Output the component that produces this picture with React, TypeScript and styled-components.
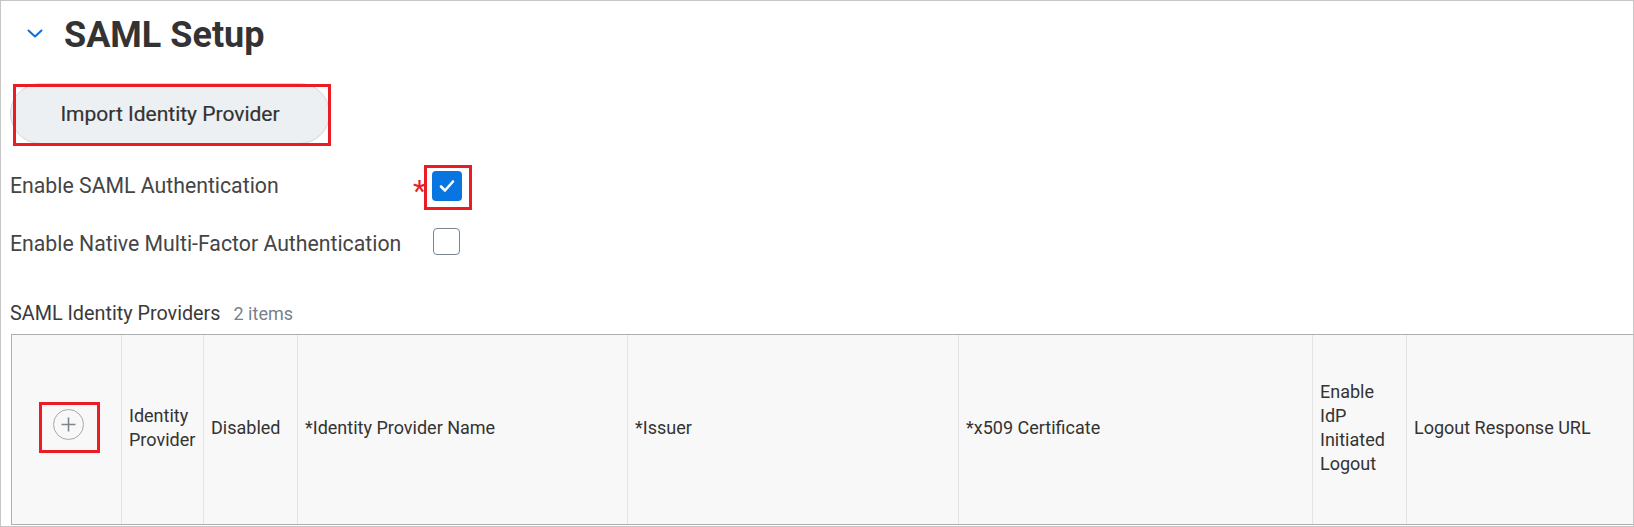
import React from "react";
import styled, { createGlobalStyle } from "styled-components";

const GlobalStyle = createGlobalStyle`
  html, body { margin: 0; padding: 0; background: #ffffff; }
  body { font-family: Roboto, "Liberation Sans", Arial, sans-serif; }
  * { box-sizing: border-box; }
`;

const Frame = styled.div`
  width: 1634px;
  height: 527px;
  border: 1px solid #c6c6c6;
  overflow: hidden;
  background: #ffffff;
  display: flex;
  flex-direction: column;
`;

const Header = styled.div`
  display: flex;
  align-items: flex-start;
  margin-top: 13px;
  padding-left: 26px;
  gap: 21px;
`;

const Chevron = styled.svg`
  margin-top: 15px;
  width: 16px;
  height: 9px;
  flex: none;
`;

const Title = styled.h1`
  margin: 0;
  font-size: 36px;
  line-height: 42px;
  font-weight: 700;
  color: #333333;
  letter-spacing: 0;
`;

const Annotated = styled.div`
  position: relative;
  display: inline-flex;
  justify-self: start;
`;

const RedBox = styled.span<{ $t: number; $r: number; $b: number; $l: number }>`
  position: absolute;
  top: ${(p) => -p.$t}px;
  right: ${(p) => -p.$r}px;
  bottom: ${(p) => -p.$b}px;
  left: ${(p) => -p.$l}px;
  border: 3px solid #ec1c24;
  pointer-events: none;
`;

const ButtonArea = styled.div`
  margin-top: 27px;
  padding-left: 9px;
`;

const PillButton = styled.button`
  width: 320px;
  height: 61px;
  border-radius: 31px;
  border: 1px solid #d3d7da;
  background: #edf0f2;
  font-family: Roboto, "Liberation Sans", Arial, sans-serif;
  font-size: 21px;
  font-weight: 400;
  -webkit-text-stroke: 0.2px #333333;
  color: #333333;
  padding: 0;
  cursor: pointer;
`;

const Fields = styled.div`
  margin-top: 27px;
  display: flex;
  flex-direction: column;
  gap: 27px;
  padding-left: 9px;
`;

const FieldRow = styled.div`
  display: grid;
  grid-template-columns: 398px 24px auto;
  align-items: center;
  height: 30px;
`;

const Label = styled.span`
  font-size: 21.25px;
  line-height: 24px;
  color: #454545;
`;

const Req = styled.span`
  position: relative;
  top: 5px;
  color: #e8202a;
  font-size: 30px;
  line-height: 24px;
  padding-left: 5px;
`;

const Box = styled.span<{ $checked?: boolean }>`
  display: inline-flex;
  align-items: center;
  justify-content: center;
  width: ${(p) => (p.$checked ? 30 : 27)}px;
  height: ${(p) => (p.$checked ? 30 : 27)}px;
  margin-left: ${(p) => (p.$checked ? 0 : 1)}px;
  border-radius: 4px;
  background: ${(p) => (p.$checked ? "#0875e1" : "#ffffff")};
  border: ${(p) => (p.$checked ? "none" : "1.5px solid #7b858f")};
`;

const SectionHeading = styled.div`
  margin-top: 44px;
  padding-left: 9px;
  display: flex;
  align-items: baseline;
  gap: 13px;
`;

const SectionTitle = styled.span`
  font-size: 19.8px;
  line-height: 24px;
  color: #3a3a3a;
`;

const Count = styled.span`
  font-size: 18px;
  line-height: 24px;
  color: #76818b;
`;

const TableWrap = styled.div`
  margin-top: 8px;
  margin-left: 10px;
  width: 1800px;
  border-top: 1px solid #aeaeae;
  border-bottom: 1px solid #aeaeae;
  border-left: 1px solid #aeaeae;
  background: #f8f8f8;
`;

const HeaderRow = styled.div`
  display: grid;
  grid-template-columns: 110px 82px 94px 330px 331px 354px 94px 1fr;
  height: 189px;
`;

const HeadCell = styled.div`
  display: flex;
  align-items: center;
  padding: 0 7px 4px;
  border-right: 1px solid #e4e4e4;
  font-size: 18px;
  line-height: 24px;
  color: #333333;
`;

const AddCell = styled(HeadCell)`
  justify-content: center;
  padding: 0 0 10px 3px;
`;

const AddIcon = styled.svg`
  width: 31px;
  height: 31px;
  display: block;
`;

const columns = [
  "Identity Provider",
  "Disabled",
  "*Identity Provider Name",
  "*Issuer",
  "*x509 Certificate",
  "Enable IdP Initiated Logout",
  "Logout Response URL",
];

export default function App() {
  return (
    <>
      <GlobalStyle />
      <Frame>
        <Header>
          <Chevron viewBox="0 0 16 9">
            <path d="M1.5 1.5 L8 7.5 L14.5 1.5" fill="none" stroke="#0b6fd8" strokeWidth="2" strokeLinecap="round" strokeLinejoin="round" />
          </Chevron>
          <Title>SAML Setup</Title>
        </Header>

        <ButtonArea>
          <Annotated>
            <PillButton type="button">Import Identity Provider</PillButton>
            <RedBox $t={-1} $r={1} $b={2} $l={-3} />
          </Annotated>
        </ButtonArea>

        <Fields>
          <FieldRow>
            <Label>Enable SAML Authentication</Label>
            <Req>*</Req>
            <Annotated>
              <Box $checked>
                <svg width="18" height="16" viewBox="0 0 18 16">
                  <path d="M3 8.5 L7 12.5 L15 3.5" fill="none" stroke="#ffffff" strokeWidth="2.6" strokeLinecap="round" strokeLinejoin="round" />
                </svg>
              </Box>
              <RedBox $t={6} $r={10} $b={9} $l={8} />
            </Annotated>
          </FieldRow>
          <FieldRow>
            <Label>Enable Native Multi-Factor Authentication</Label>
            <span />
            <div>
              <Box />
            </div>
          </FieldRow>
        </Fields>

        <SectionHeading>
          <SectionTitle>SAML Identity Providers</SectionTitle>
          <Count>2 items</Count>
        </SectionHeading>

        <TableWrap>
          <HeaderRow>
            <AddCell>
              <Annotated>
                <AddIcon viewBox="0 0 31 31">
                  <circle cx="15.5" cy="15.5" r="15" fill="#f8f8f8" stroke="#a2a8ae" strokeWidth="1" />
                  <path d="M15.5 8.5 V22.5 M8.5 15.5 H22.5" stroke="#7e868d" strokeWidth="1.6" />
                </AddIcon>
                <RedBox $t={7} $r={16} $b={13} $l={14} />
              </Annotated>
            </AddCell>
            {columns.map((c) => (
              <HeadCell key={c}>{c}</HeadCell>
            ))}
          </HeaderRow>
        </TableWrap>
      </Frame>
    </>
  );
}
